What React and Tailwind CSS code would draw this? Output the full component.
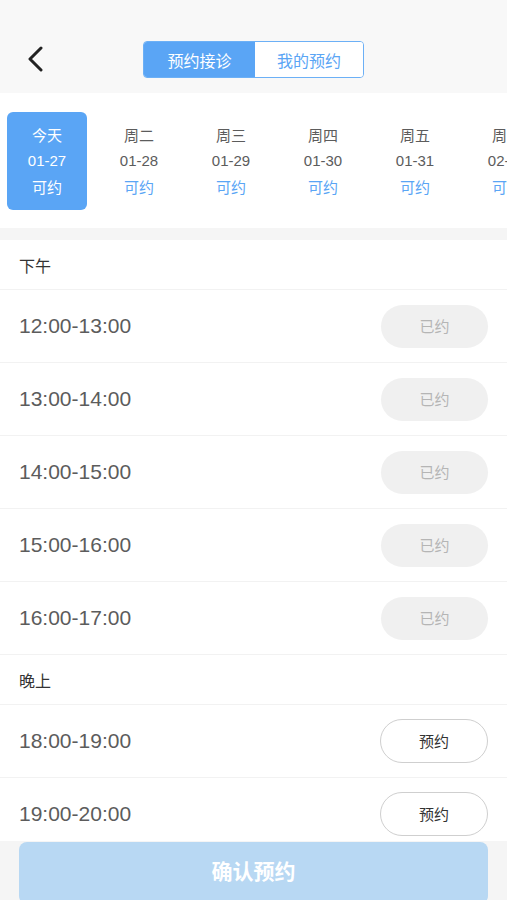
import React from "react";

const font = { fontFamily: '"Noto Sans CJK SC", "Noto Sans", sans-serif' };
const latin = { fontFamily: '"Liberation Sans", "Noto Sans CJK SC", sans-serif' };

const days = [
  { d: "今天", date: "01-27", active: true },
  { d: "周二", date: "01-28" },
  { d: "周三", date: "01-29" },
  { d: "周四", date: "01-30" },
  { d: "周五", date: "01-31" },
  { d: "周六", date: "02-01" },
];

function Row({ time, booked }) {
  return (
    <div className="flex items-center justify-between h-[73px] pl-[19px] pr-[19px] border-b border-[#f2f2f2]">
      <span className="text-[21px] text-[#5c5c5c]" style={latin}>{time}</span>
      {booked ? (
        <div className="w-[107px] h-[43px] rounded-full bg-[#f0f0f0] flex items-center justify-center text-[15px] text-[#b5b5b5]">已约</div>
      ) : (
        <div className="w-[108px] h-[44px] rounded-full border border-[#cfcfcf] bg-white flex items-center justify-center text-[15px] text-[#333]">预约</div>
      )}
    </div>
  );
}

function Header({ title }) {
  return (
    <div className="h-[50px] flex items-center pl-[19px] text-[16px] text-[#333] border-b border-[#f2f2f2]">{title}</div>
  );
}

export default function App() {
  return (
    <div className="w-[507px] h-[900px] overflow-hidden relative bg-white" style={font}>
      <div className="h-[93px] bg-[#f8f8f8] relative flex items-end pb-[15px] justify-center">
        <div className="absolute left-[26px] top-[46px]">
          <svg width="20" height="26" viewBox="0 0 20 26">
            <path d="M15 2 L4 13 L15 24" fill="none" stroke="#222" strokeWidth="3" strokeLinecap="round" strokeLinejoin="round" />
          </svg>
        </div>
        <div className="flex w-[221px] h-[37px] rounded-[4px] border border-[#6cb0f6] overflow-hidden">
          <div className="w-[111px] bg-[#5aa5f5] text-white text-[16px] flex items-center justify-center">预约接诊</div>
          <div className="flex-1 bg-white text-[#5aa5f5] text-[16px] flex items-center justify-center">我的预约</div>
        </div>
      </div>
      <div className="h-[135px] bg-white flex items-start pt-[19px] pl-[7px] gap-[12px] overflow-hidden">
        {days.map((x, i) => (
          <div
            key={i}
            className={`shrink-0 w-[80px] h-[98px] rounded-[6px] flex flex-col items-center justify-center gap-[6px] text-[15px] leading-[20px] ${x.active ? "bg-[#5aa5f5] text-white" : "text-[#5c5c5c]"}`}
          >
            <span>{x.d}</span>
            <span style={latin}>{x.date}</span>
            <span className={x.active ? "text-white" : "text-[#5aa5f5]"}>可约</span>
          </div>
        ))}
      </div>
      <div className="h-[12px] bg-[#f5f5f5]" />
      <Header title="下午" />
      <Row time="12:00-13:00" booked />
      <Row time="13:00-14:00" booked />
      <Row time="14:00-15:00" booked />
      <Row time="15:00-16:00" booked />
      <Row time="16:00-17:00" booked />
      <Header title="晚上" />
      <Row time="18:00-19:00" />
      <Row time="19:00-20:00" />
      <div className="absolute left-0 right-0 top-[841px] h-[59px] bg-[#f5f5f5] px-[19px] pt-[1px]">
        <div className="h-[62px] rounded-[8px] bg-[#b8d8f3] flex items-center justify-center text-white text-[21px] font-bold pb-[4px]">确认预约</div>
      </div>
    </div>
  );
}
